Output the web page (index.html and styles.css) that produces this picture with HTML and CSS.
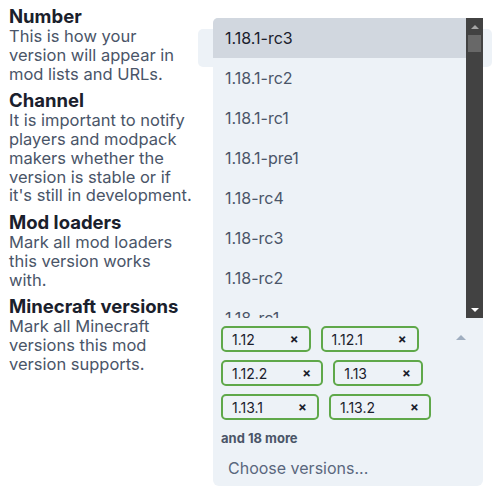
FILE: index.html
```html
<!DOCTYPE html>
<html lang="en">
<head>
<meta charset="utf-8">
<title>Version details</title>
<link rel="stylesheet" href="styles.css">
</head>
<body>
<div class="page">
  <div class="labels">
    <section class="field">
      <h3 class="field-title">Number</h3>
      <p class="field-desc">This is how your<br>version will appear in<br>mod lists and URLs.</p>
    </section>
    <section class="field">
      <h3 class="field-title">Channel</h3>
      <p class="field-desc">It is important to notify<br>players and modpack<br>makers whether the<br>version is stable or if<br>it's still in development.</p>
    </section>
    <section class="field">
      <h3 class="field-title">Mod loaders</h3>
      <p class="field-desc">Mark all mod loaders<br>this version works<br>with.</p>
    </section>
    <section class="field">
      <h3 class="field-title">Minecraft versions</h3>
      <p class="field-desc">Mark all Minecraft<br>versions this mod<br>version supports.</p>
    </section>
  </div>
  <div class="controls">
    <div class="text-input"></div>
    <div class="multiselect">
      <div class="dropdown">
        <ul class="options">
          <li class="option active">1.18.1-rc3</li>
          <li class="option">1.18.1-rc2</li>
          <li class="option">1.18.1-rc1</li>
          <li class="option">1.18.1-pre1</li>
          <li class="option">1.18-rc4</li>
          <li class="option">1.18-rc3</li>
          <li class="option">1.18-rc2</li>
          <li class="option">1.18-rc1</li>
        </ul>
        <div class="scrollbar">
          <span class="sb-arrow sb-up"></span>
          <span class="sb-thumb"></span>
          <span class="sb-fill"></span>
          <span class="sb-arrow sb-down"></span>
        </div>
      </div>
      <div class="tags">
        <span class="tag"><span class="tag-text">1.12</span><span class="tag-x">×</span></span>
        <span class="tag"><span class="tag-text">1.12.1</span><span class="tag-x">×</span></span>
        <span class="tag"><span class="tag-text">1.12.2</span><span class="tag-x">×</span></span>
        <span class="tag"><span class="tag-text">1.13</span><span class="tag-x">×</span></span>
        <span class="tag"><span class="tag-text">1.13.1</span><span class="tag-x">×</span></span>
        <span class="tag"><span class="tag-text">1.13.2</span><span class="tag-x">×</span></span>
      </div>
      <div class="more">and 18 more</div>
      <div class="placeholder">Choose versions...</div>
      <span class="caret"></span>
    </div>
  </div>
</div>
</body>
</html>
```

FILE: styles.css
```css
* { box-sizing: border-box; }
html, body { margin: 0; padding: 0; background: #ffffff; }
body {
  font-family: Inter, "Noto Sans", "Liberation Sans", sans-serif;
  color: #1a202c;
}
.page {
  display: flex;
  align-items: flex-start;
  padding-left: 9px;
  padding-top: 5px;
}
.labels {
  width: 186px;
  flex: none;
  margin-right: 3px;
  display: flex;
  flex-direction: column;
  gap: 6px;
  white-space: nowrap;
}
.field-title {
  margin: 0;
  font-size: 18.5px;
  line-height: 22px;
  font-weight: 700;
  color: #1a202c;
}
.field-desc {
  margin: 0;
  font-size: 16.5px;
  line-height: 18.75px;
  color: #4a5568;
}
.controls {
  flex: 1;
  display: flex;
  flex-direction: column;
}
.text-input {
  margin-top: 24px;
  height: 38px;
  background: #edf2f7;
  border-radius: 5px;
}
.multiselect {
  position: relative;
  margin-top: 251px;
  margin-left: 15px;
  width: 270px;
  background: #edf2f7;
  border-radius: 0 0 6px 6px;
  padding: 8px 40px 8px 8px;
}
.dropdown {
  position: absolute;
  left: 0;
  right: 0;
  bottom: 100%;
  height: 300px;
  display: flex;
  background: #edf2f7;
  border-radius: 5px 0 0 0;
  overflow: hidden;
}
.options {
  flex: 1;
  margin: 0;
  padding: 0;
  list-style: none;
  overflow: hidden;
}
.option {
  height: 40px;
  display: flex;
  align-items: center;
  padding-left: 12px;
  font-size: 16px;
  color: #4a5568;
}
.option.active {
  background: #d1d7df;
  color: #1a202c;
}
.scrollbar {
  width: 17px;
  flex: none;
  background: #424242;
  display: flex;
  flex-direction: column;
  align-items: center;
}
.sb-arrow {
  height: 17px;
  width: 17px;
  flex: none;
  display: flex;
  align-items: center;
  justify-content: center;
}
.sb-arrow::before {
  content: "";
  width: 0;
  height: 0;
  border-left: 4px solid transparent;
  border-right: 4px solid transparent;
}
.sb-up::before { border-bottom: 4px solid #a6a6a6; }
.sb-down::before { border-top: 4px solid #ffffff; }
.sb-thumb {
  width: 13px;
  height: 17px;
  background: #686868;
  flex: none;
}
.sb-fill { flex: 1; }
.tags {
  display: flex;
  flex-wrap: wrap;
  gap: 8px 10px;
}
.tag {
  height: 26px;
  display: inline-flex;
  align-items: center;
  padding: 0 10px 0 9px;
  border: 2px solid #5fa84a;
  border-radius: 5px;
  font-size: 14px;
  color: #1a202c;
}
.tag-x {
  margin-left: 35px;
  font-weight: 700;
  font-size: 13px;
}
.more {
  margin-top: 9px;
  font-size: 13px;
  line-height: 18px;
  font-weight: 700;
  color: #4a5568;
}
.placeholder {
  margin-top: 11px;
  padding-left: 7px;
  font-size: 16px;
  line-height: 20px;
  color: #5a677d;
}
.caret {
  position: absolute;
  right: 17px;
  top: 17px;
  width: 0;
  height: 0;
  border-left: 5px solid transparent;
  border-right: 5px solid transparent;
  border-bottom: 5px solid #a0aec0;
}
```
